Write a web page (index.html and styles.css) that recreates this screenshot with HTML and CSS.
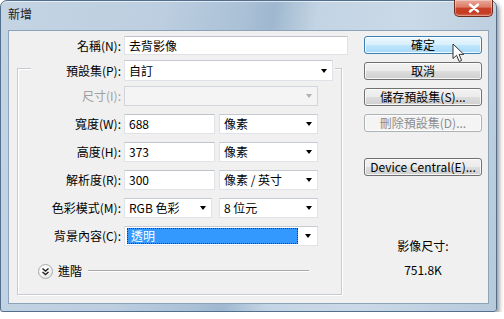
FILE: index.html
```html
<!DOCTYPE html>
<html lang="zh-Hant">
<head>
  <meta charset="UTF-8">
  <title>新增</title>
  <link rel="stylesheet" href="styles.css">
</head>
<body>
  <div class="window">
    <!-- Title bar -->
    <div class="titlebar">
      <span class="title">新增</span>
      <span class="close">
        <svg width="14" height="10" viewBox="0 0 14 10"><path d="M3 1.5 L11 8.5 M11 1.5 L3 8.5" stroke="#fff" stroke-width="2.4" stroke-linecap="round"/></svg>
      </span>
    </div>

    <div class="client">
      <!-- Left: document settings -->
      <div class="form">
        <div class="row name-row">
          <span class="lbl">名稱(N):</span>
          <div class="field name-field">去背影像</div>
        </div>

        <div class="group">
          <div class="legend">
            <span class="lbl">預設集(P):</span>
            <div class="select preset">自訂<span class="arrow"></span></div>
          </div>

          <div class="rows">
            <div class="row">
              <span class="lbl disabled">尺寸(I):</span>
              <div class="select size-select is-disabled"><span class="arrow"></span></div>
            </div>
            <div class="row">
              <span class="lbl">寬度(W):</span>
              <div class="field num-field">688</div>
              <div class="select unit">像素<span class="arrow"></span></div>
            </div>
            <div class="row">
              <span class="lbl">高度(H):</span>
              <div class="field num-field">373</div>
              <div class="select unit">像素<span class="arrow"></span></div>
            </div>
            <div class="row">
              <span class="lbl">解析度(R):</span>
              <div class="field num-field">300</div>
              <div class="select unit">像素 / 英寸<span class="arrow"></span></div>
            </div>
            <div class="row">
              <span class="lbl">色彩模式(M):</span>
              <div class="select mode">RGB 色彩<span class="arrow"></span></div>
              <div class="select unit bits">8 位元<span class="arrow"></span></div>
            </div>
            <div class="row">
              <span class="lbl">背景內容(C):</span>
              <div class="select wide">
                <span class="selected">透明</span>
                <span class="arrow"></span>
              </div>
            </div>
          </div>

          <div class="advanced">
            <span class="chevron">
              <svg width="15" height="15" viewBox="0 0 15 15"><path d="M4.5 4.5 L7.5 7 L10.5 4.5 M4.5 8 L7.5 10.5 L10.5 8" fill="none" stroke="#222" stroke-width="1.4"/></svg>
            </span>
            <span class="adv-text">進階</span>
            <span class="adv-line"></span>
          </div>
        </div>
      </div>

      <!-- Right: buttons and image size -->
      <div class="side">
        <button class="btn default">確定</button>
        <button class="btn">取消</button>
        <button class="btn">儲存預設集(S)...</button>
        <button class="btn" disabled>刪除預設集(D)...</button>
        <button class="btn device">Device Central(E)...</button>

        <div class="img-size">
          <p class="size-label">影像尺寸:</p>
          <p class="size-value">751.8K</p>
        </div>
      </div>
    </div>

    <!-- Mouse pointer over the OK button -->
    <svg class="cursor" width="13" height="20" viewBox="0 0 13 20">
      <path d="M1 1 L1 15.5 L4.6 12.3 L7.2 18.5 L9.6 17.5 L7.1 11.4 L11.8 11.4 Z" fill="#fff" stroke="#333" stroke-width="1" stroke-linejoin="round"/>
    </svg>
  </div>
</body>
</html>
```

FILE: styles.css
```css
/* General Styles */
* {
  margin: 0;
  padding: 0;
  box-sizing: border-box;
}

body {
  font-family: "Noto Sans CJK TC", "Noto Sans", sans-serif;
  font-size: 12px;
  line-height: 16px;
  color: #000;
  background: #fff;
}

/* Window frame */
.window {
  position: relative;
  width: 497px;
  height: 312px;
  display: flex;
  flex-direction: column;
  border: 1px solid #52708d;
  border-radius: 7px 7px 3px 3px;
  background: linear-gradient(100deg, #c4d4e3 0%, #bccee0 30%, #a9c0d6 45%, #9fb8cf 50%, #c3d4e4 58%, #cad9e7 75%, #b6cadc 100%);
  box-shadow: 2px 3px 5px rgba(0, 0, 0, 0.45), inset 0 1px 0 rgba(255, 255, 255, 0.6);
}

.titlebar {
  height: 29px;
  display: flex;
  justify-content: space-between;
  align-items: flex-start;
  padding: 0 3px 0 7px;
}

.title {
  margin-top: 5px;
  color: #1a1a1a;
}

.close {
  width: 39px;
  height: 17px;
  margin-top: -1px;
  display: flex;
  align-items: center;
  justify-content: center;
  border: 1px solid #6e2b1f;
  border-top: none;
  border-radius: 0 0 5px 5px;
  background: linear-gradient(#e9a899 0%, #dc7b66 45%, #c8432a 50%, #c43c22 80%, #d86a4f 100%);
  box-shadow: inset 0 0 0 1px rgba(255, 255, 255, 0.35);
}

/* Client area */
.client {
  flex: 1;
  margin: 0 7px 7px;
  display: flex;
  background: #f0f0f0;
  border: 1px solid #8da3b9;
}

.form {
  width: 340px;
  padding-left: 8px;
}

.row {
  display: flex;
  align-items: center;
  height: 20px;
}

.lbl {
  width: 103px;
  margin-right: 3px;
  text-align: right;
  white-space: nowrap;
}

.lbl.disabled {
  color: #a0a0a0;
}

.name-row {
  margin: 5px 0 0 1px;
  height: 19px;
}

.field {
  height: 100%;
  padding-left: 4px;
  background: #fff;
  border: 1px solid #dfe3e8;
  border-top-color: #bfc4ca;
  display: flex;
  align-items: center;
}

.name-field {
  width: 224px;
}

.num-field {
  width: 91px;
  margin-right: 4px;
}

/* Drop-down lists */
.select {
  position: relative;
  height: 100%;
  padding-left: 4px;
  display: flex;
  align-items: center;
  background: #fff;
  border: 1px solid #dfe3e8;
  border-top-color: #c6cbd1;
  white-space: nowrap;
}

.arrow {
  position: absolute;
  right: 5px;
  top: 50%;
  margin-top: -2px;
  border-left: 3.5px solid transparent;
  border-right: 3.5px solid transparent;
  border-top: 4px solid #000;
}

.select.is-disabled {
  background: #f4f4f4;
  border-color: #d2d6da;
}

.select.is-disabled .arrow {
  border-top-color: #b0b0b0;
}

.unit {
  width: 99px;
}

.mode {
  width: 88px;
  margin-right: 7px;
}

.size-select,
.wide {
  width: 194px;
}

.wide {
  padding: 1px 19px 1px 2px;
}

.wide .arrow {
  right: 6px;
}

.selected {
  flex: 1;
  height: 100%;
  padding-left: 4px;
  display: flex;
  align-items: center;
  color: #fff;
  background: #3399ff;
  outline: 1px dotted #1b3b5e;
  outline-offset: -1px;
}

/* Preset group box */
.group {
  margin-top: 13px;
  width: 325px;
  height: 227px;
  border: 1px solid #c5cbd0;
  box-shadow: inset 1px 1px 0 #fff, 1px 1px 0 #fff;
}

.legend {
  display: flex;
  align-items: center;
  width: max-content;
  height: 21px;
  margin: -9px 0 0 13px;
  padding-right: 2px;
  background: #f0f0f0;
}

.legend .lbl {
  width: 90px;
}

.preset {
  width: 209px;
}

.rows {
  margin-top: 5px;
  display: flex;
  flex-direction: column;
  gap: 8px;
}

.advanced {
  display: flex;
  align-items: center;
  height: 16px;
  margin-top: 17px;
  padding-left: 20px;
}

.chevron {
  width: 15px;
  height: 15px;
  border-radius: 50%;
  border: 1px solid #a7abb0;
  background: radial-gradient(circle at 40% 30%, #fff 0%, #f3f3f3 50%, #d9dcdf 100%);
  display: flex;
}

.chevron svg {
  margin: -1px;
}

.adv-text {
  margin-left: 5px;
}

.adv-line {
  flex: 1;
  height: 2px;
  margin: 0 32px 0 6px;
  border-top: 1px solid #a9a9a9;
  border-bottom: 1px solid #fff;
}

/* Buttons column */
.side {
  width: 118px;
  margin-left: 15px;
  padding-top: 5px;
  display: flex;
  flex-direction: column;
  gap: 8px;
}

.btn {
  height: 18px;
  font-family: inherit;
  font-size: 12px;
  line-height: 14px;
  color: #000;
  border: 1px solid #707070;
  border-radius: 3px;
  background: linear-gradient(#f2f2f2 0%, #ebebeb 48%, #dddddd 52%, #cfcfcf 100%);
  box-shadow: inset 0 0 0 1px rgba(255, 255, 255, 0.8);
}

.btn.default {
  border-color: #3c7fb1;
  background: linear-gradient(#eaf6fd 0%, #d9f0fc 48%, #bee6fd 52%, #a7d9f5 100%);
}

.btn:disabled {
  color: #8d8d8d;
  border-color: #adb2b5;
  background: #f4f4f4;
}

.btn.device {
  margin-top: 18px;
}

.img-size {
  margin-top: 54px;
  text-align: center;
}

.size-value {
  margin-top: 8px;
}

.cursor {
  position: absolute;
  left: 451px;
  top: 42px;
}
```
